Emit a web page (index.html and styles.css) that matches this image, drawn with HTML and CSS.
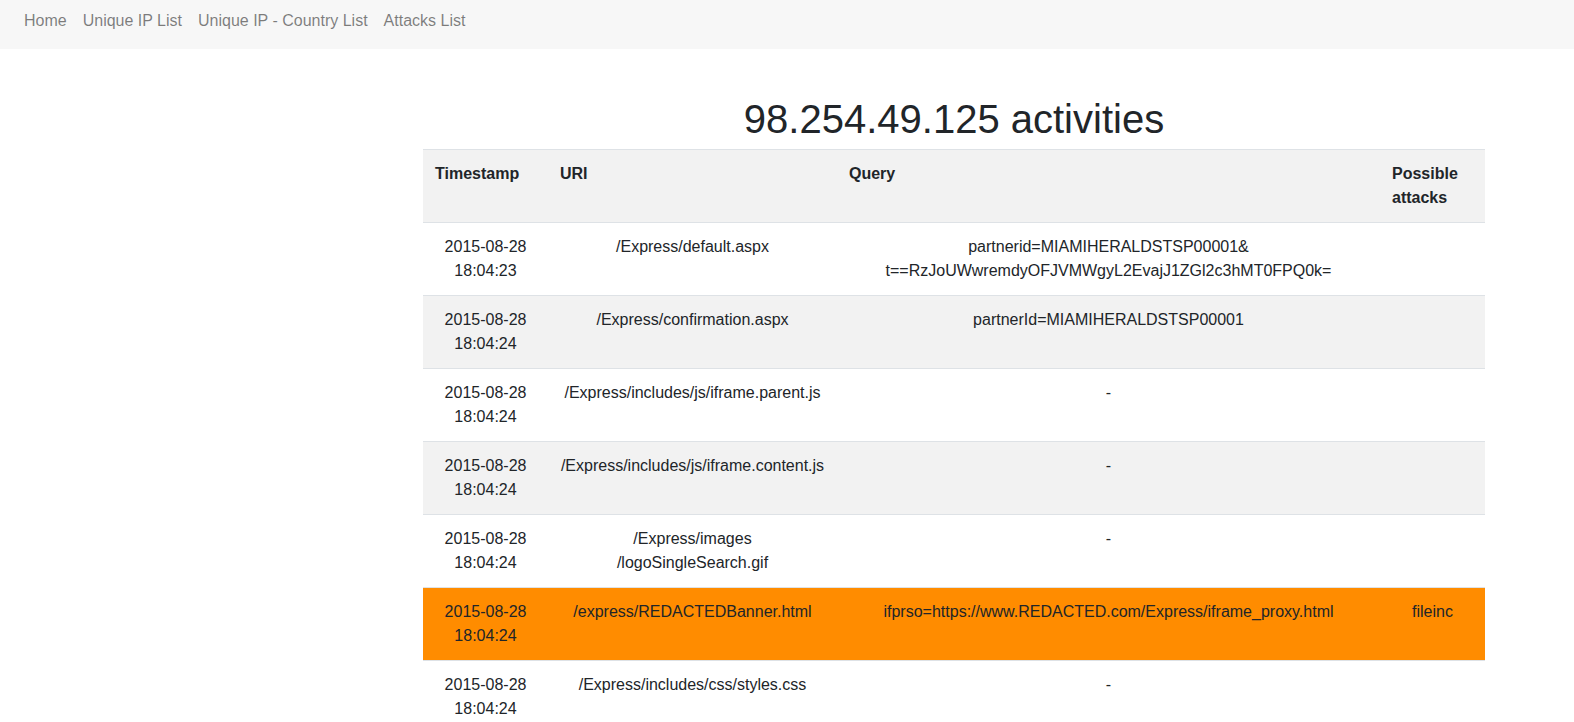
FILE: index.html
```html
<!DOCTYPE html>
<html>
<head>
<meta charset="utf-8">
<title>98.254.49.125 activities</title>
<link rel="stylesheet" href="styles.css">
</head>
<body>
<nav class="navbar">
  <a class="nav-link" href="#">Home</a>
  <a class="nav-link" href="#">Unique IP List</a>
  <a class="nav-link" href="#">Unique IP - Country List</a>
  <a class="nav-link" href="#">Attacks List</a>
</nav>
<main class="content">
  <h1 class="title">98.254.49.125 activities</h1>
  <table class="table">
    <colgroup>
      <col class="c-time">
      <col class="c-uri">
      <col class="c-query">
      <col class="c-attack">
    </colgroup>
    <tbody>
      <tr class="head">
        <th>Timestamp</th>
        <th>URI</th>
        <th>Query</th>
        <th>Possible attacks</th>
      </tr>
      <tr>
        <td>2015-08-28 18:04:23</td>
        <td>/Express/default.aspx</td>
        <td>partnerid=MIAMIHERALDSTSP00001&amp;<br>t==RzJoUWwremdyOFJVMWgyL2EvajJ1ZGl2c3hMT0FPQ0k=</td>
        <td></td>
      </tr>
      <tr>
        <td>2015-08-28 18:04:24</td>
        <td>/Express/confirmation.aspx</td>
        <td>partnerId=MIAMIHERALDSTSP00001</td>
        <td></td>
      </tr>
      <tr>
        <td>2015-08-28 18:04:24</td>
        <td>/Express/includes/js/iframe.parent.js</td>
        <td>-</td>
        <td></td>
      </tr>
      <tr>
        <td>2015-08-28 18:04:24</td>
        <td>/Express/includes/js/iframe.content.js</td>
        <td>-</td>
        <td></td>
      </tr>
      <tr>
        <td>2015-08-28 18:04:24</td>
        <td>/Express/images<br>/logoSingleSearch.gif</td>
        <td>-</td>
        <td></td>
      </tr>
      <tr class="attack">
        <td>2015-08-28 18:04:24</td>
        <td>/express/REDACTEDBanner.html</td>
        <td>ifprso=https://www.REDACTED.com/Express/iframe_proxy.html</td>
        <td>fileinc</td>
      </tr>
      <tr>
        <td>2015-08-28 18:04:24</td>
        <td>/Express/includes/css/styles.css</td>
        <td>-</td>
        <td></td>
      </tr>
    </tbody>
  </table>
</main>
</body>
</html>
```
FILE: styles.css
```css
html, body {
  margin: 0;
  padding: 0;
}
body {
  font-family: "Liberation Sans", Arial, sans-serif;
  font-size: 16px;
  line-height: 1.5;
  color: #212529;
  background: #fff;
}
.navbar {
  display: flex;
  align-items: center;
  height: 49px;
  box-sizing: border-box;
  padding: 0 16px 7px;
  background: #f7f7f7;
}
.nav-link {
  padding: 0 8px;
  color: rgba(0, 0, 0, 0.5);
  text-decoration: none;
}
.content {
  padding: 46px 89px 0 423px;
}
.title {
  margin: 0 0 6px;
  font-size: 40px;
  font-weight: 500;
  line-height: 1.2;
  text-align: center;
}
.table {
  width: 1062px;
  border-collapse: collapse;
  table-layout: fixed;
}
.c-time { width: 125px; }
.c-uri { width: 289px; }
.c-query { width: 543px; }
.c-attack { width: 105px; }
.table th,
.table td {
  padding: 12px;
  border-top: 1px solid #dee2e6;
  vertical-align: top;
}
.table th {
  text-align: left;
  font-weight: bold;
}
.table td {
  text-align: center;
}
.table tr:nth-child(odd) {
  background: #f2f2f2;
}
.table tr.attack {
  background: #ff8c00;
}
```
